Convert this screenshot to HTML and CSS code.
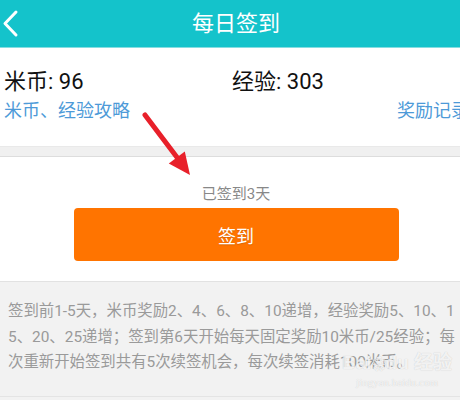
FILE: index.html
```html
<!DOCTYPE html>
<html lang="zh-CN">
<head>
    <meta charset="UTF-8">
    <meta name="viewport" content="width=device-width, initial-scale=1.0">
    <title>每日签到</title>
    <link rel="stylesheet" href="styles.css">
</head>
<body>
    <div class="page">
        <div class="top-bar">
            <span class="back-button">
                <svg width="20" height="40" viewBox="0 0 20 40">
                    <polyline points="16,12 5,23.5 16,35" fill="none" stroke="#fff" stroke-width="3" stroke-linecap="round" stroke-linejoin="round"/>
                </svg>
            </span>
            <h1>每日签到</h1>
            <span></span>
        </div>

        <div class="info">
            <div class="stats">
                <span>米币: 96</span>
                <span>经验: 303</span>
            </div>
            <div class="links">
                <a href="#">米币、经验攻略</a>
                <a href="#">奖励记录</a>
            </div>
        </div>

        <div class="divider"></div>

        <div class="sign">
            <p class="days">已签到3天</p>
            <button class="sign-button">签到</button>
        </div>

        <div class="rules">
            <p>签到前1-5天，米币奖励2、4、6、8、10递增，经验奖励5、10、15、20、25递增；签到第6天开始每天固定奖励10米币/25经验；每次重新开始签到共有5次续签机会，每次续签消耗100米币。</p>
        </div>

        <svg class="pointer" width="60" height="80" viewBox="0 0 60 80">
            <line x1="5" y1="5" x2="39" y2="50" stroke="#e8202a" stroke-width="5" stroke-linecap="round"/>
            <polygon points="50,65 28.8,53.4 44.8,41.4" fill="#e8202a"/>
        </svg>

        <div class="watermark">
            <span class="brand">Bai<span class="paw">&#x2740;</span>du 经验</span>
            <span class="site">jingyan.baidu.com</span>
        </div>
    </div>
</body>
</html>
```

FILE: styles.css
```css
body {
    margin: 0;
    padding: 0;
    overflow: hidden;
    background-color: #f2f2f2;
    font-family: Roboto, "Noto Sans CJK SC", sans-serif;
}

.page {
    width: 472px;
    position: relative;
}

.top-bar {
    background-color: #14c3cb;
    height: 47px;
    border-bottom: 1px solid #86dde1;
    display: grid;
    grid-template-columns: 48px 1fr 48px;
    align-items: center;
}

.top-bar h1 {
    margin: 0;
    font-size: 22px;
    font-weight: normal;
    color: #fff;
    text-align: center;
    line-height: 47px;
}

.back-button {
    display: flex;
    height: 47px;
    align-items: flex-start;
}

.info {
    background-color: #fff;
    padding: 20px 3px 23px 4px;
}

.stats {
    display: grid;
    grid-template-columns: 228px 1fr;
    font-size: 22px;
    line-height: 28px;
    color: #111;
    margin-bottom: 3px;
}

.links {
    display: flex;
    justify-content: space-between;
    font-size: 18px;
    line-height: 24px;
}

.links a {
    color: #4d9ad8;
    text-decoration: none;
}

.divider {
    height: 9px;
    background-color: #f0f0f0;
    border-top: 1px solid #e9e9e9;
    border-bottom: 1px solid #dddddd;
}

.sign {
    background-color: #fff;
    padding: 27px 0 20px;
    border-bottom: 1px solid #e2e2e2;
}

.days {
    margin: 0 0 4px;
    font-size: 15px;
    line-height: 20px;
    color: #888;
    text-align: center;
}

.sign-button {
    display: block;
    width: 325px;
    height: 53px;
    margin: 0 auto;
    background-color: #ff7400;
    border: none;
    border-radius: 4px;
    color: #fff;
    font-family: inherit;
    font-size: 18px;
    text-shadow: 0 1px 1px rgba(0, 0, 0, 0.15);
}

.rules {
    background-color: #f2f2f2;
    padding: 17px 9px 20px 8px;
    border-bottom: 1px solid #e4e4e4;
}

.rules p {
    margin: 0;
    font-size: 15.4px;
    line-height: 25.5px;
    color: #9a9a9a;
    word-break: break-all;
}

.pointer {
    position: absolute;
    left: 140px;
    top: 110px;
}

.watermark {
    position: absolute;
    left: 342px;
    top: 352px;
    display: flex;
    flex-direction: column;
    align-items: center;
    color: rgba(255, 255, 255, 0.8);
    text-shadow: 0 0 1px rgba(0, 0, 0, 0.2);
}

.watermark .brand {
    font-family: "Liberation Sans", sans-serif;
    font-size: 19px;
    font-weight: bold;
    line-height: 22px;
}

.watermark .paw {
    font-size: 14px;
}

.watermark .site {
    font-family: "Liberation Serif", serif;
    font-size: 11px;
    line-height: 14px;
}
```
